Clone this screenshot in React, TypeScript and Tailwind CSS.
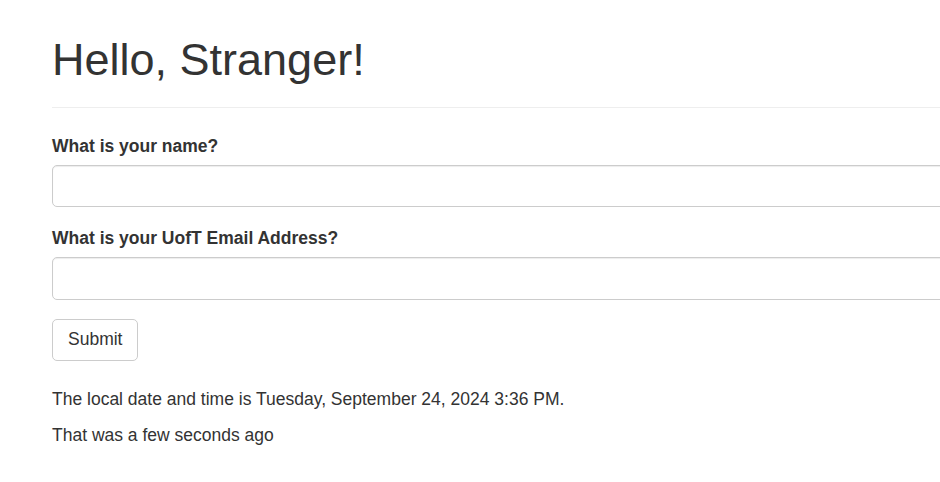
import React from 'react';

const App: React.FC = () => {
  return (
    <div className="w-[940px] h-[482px] overflow-hidden bg-white text-[#333] font-['Liberation_Sans',Arial,sans-serif] text-[17.5px] leading-[25px]">
      <div className="w-[1100px] pl-[52px]">
        <div className="pt-[35px] pb-[22px] border-b border-[#eee]">
          <h1 className="text-[45px] leading-[49.5px] font-normal">Hello, Stranger!</h1>
        </div>
        <form className="mt-[26px]" onSubmit={(e) => e.preventDefault()}>
          <div className="mb-[19px]">
            <label className="block font-bold mb-[6px]">What is your name?</label>
            <input
              type="text"
              className="block w-full h-[42.5px] border border-[#ccc] rounded-[5px] shadow-[inset_0_1px_1px_rgba(0,0,0,0.075)] px-[15px] outline-none"
            />
          </div>
          <div className="mb-[19px]">
            <label className="block font-bold mb-[6px]">What is your UofT Email Address?</label>
            <input
              type="text"
              className="block w-full h-[42.5px] border border-[#ccc] rounded-[5px] shadow-[inset_0_1px_1px_rgba(0,0,0,0.075)] px-[15px] outline-none"
            />
          </div>
          <button
            type="submit"
            className="h-[42px] px-[15px] border border-[#ccc] rounded-[5px] bg-white text-[#333]"
          >
            Submit
          </button>
        </form>
        <p className="mt-[26px] mb-[11.5px]">The local date and time is Tuesday, September 24, 2024 3:36 PM.</p>
        <p>That was a few seconds ago</p>
      </div>
    </div>
  );
};

export default App;
